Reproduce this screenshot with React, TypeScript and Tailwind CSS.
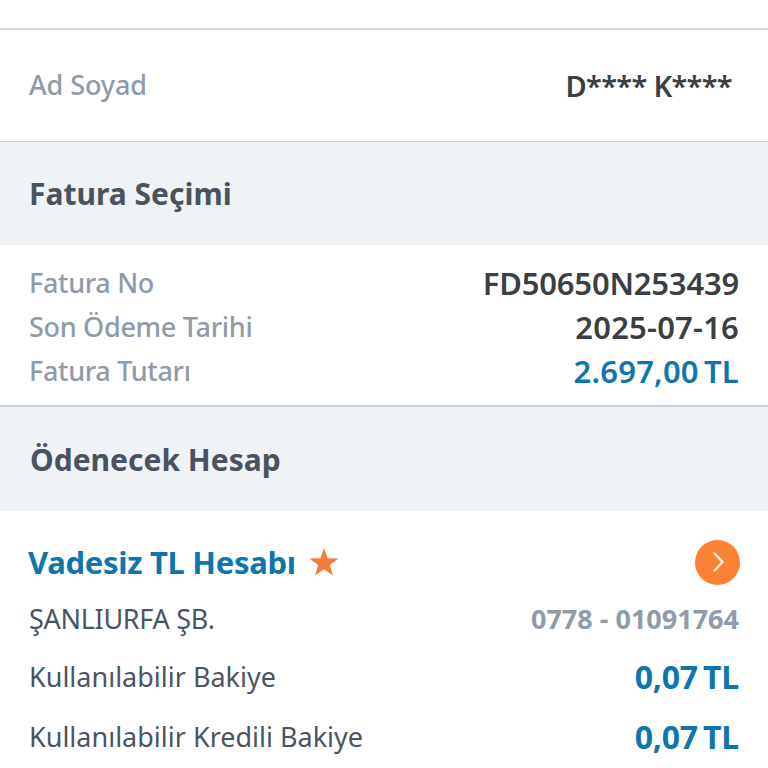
const font = "font-['Noto_Sans','Open_Sans',sans-serif]";

function InvoiceRow({ label, value, color }: { label: string; value: string; color: string }) {
  return (
    <div className="flex h-[44px] items-center justify-between">
      <span className="text-[27px] font-medium tracking-[-0.3px] text-[#8e9baa]">{label}</span>
      <span className={`text-[31px] font-semibold [word-spacing:-3px] ${color}`}>{value}</span>
    </div>
  );
}

function BalanceRow({ label, value }: { label: string; value: string }) {
  return (
    <div className="flex h-[60px] items-center justify-between">
      <span className="text-[27px] text-[#4a5560]">{label}</span>
      <span className="text-[32px] font-bold tracking-[-0.2px] [word-spacing:-3px] text-[#0f75ad]">{value}</span>
    </div>
  );
}

export default function App() {
  return (
    <div className={`h-[768px] w-[768px] overflow-hidden bg-white ${font}`}>
      <div className="h-[30px] border-b-2 border-[#d5d8db]" />

      <div className="flex h-[112px] items-center justify-between border-b border-[#cfd3d6] pl-[29px] pr-[36px]">
        <span className="text-[27px] font-medium tracking-[-0.1px] text-[#8e9baa]">Ad Soyad</span>
        <span className="text-[29px] font-semibold tracking-[-0.7px] text-[#3a3f44]">D**** K****</span>
      </div>

      <div className="flex h-[103px] items-center bg-[#eff3f5] pl-[29px]">
        <span className="text-[30px] font-bold text-[#49525e]">Fatura Seçimi</span>
      </div>

      <div className="h-[162px] border-b-2 border-[#cfd3d6] pl-[29px] pr-[29px] pt-[16px]">
        <InvoiceRow label="Fatura No" value="FD50650N253439" color="tracking-[-0.2px] text-[#3a3f44]" />
        <InvoiceRow label="Son Ödeme Tarihi" value="2025-07-16" color="tracking-[0.2px] text-[#3a3f44]" />
        <InvoiceRow label="Fatura Tutarı" value="2.697,00 TL" color="tracking-[0.2px] text-[#0f75ad]" />
      </div>

      <div className="flex h-[104px] items-center bg-[#eff3f5] pl-[30px]">
        <span className="text-[30px] font-bold text-[#49525e]">Ödenecek Hesap</span>
      </div>

      <div className="pl-[29px] pr-[29px] pt-[28px]">
        <div className="flex h-[46px] items-center justify-between">
          <div className="flex items-center gap-[12px]">
            <span className="-ml-px text-[31px] font-bold tracking-[-0.3px] text-[#0f75ad]">Vadesiz TL Hesabı</span>
            <svg width="32" height="32" viewBox="0 0 24 24" fill="#f47b3e">
              <path d="M12 1.5l2.7 7.6 8.1.2-6.4 5 2.3 7.7-6.7-4.5-6.7 4.5 2.3-7.7-6.4-5 8.1-.2z" />
            </svg>
          </div>
          <div className="-mr-px flex h-[45px] w-[45px] items-center justify-center rounded-full bg-[#fb8136]">
            <svg width="22" height="22" viewBox="0 0 24 24" fill="none" stroke="#ffeadb" strokeWidth="2.6" strokeLinecap="round" strokeLinejoin="round">
              <path d="M8 2.5l9 9.5-9 9.5" />
            </svg>
          </div>
        </div>
        <div className="mt-[12px] flex h-[44px] items-center justify-between">
          <span className="text-[27px] tracking-[-0.3px] text-[#4a5560]">ŞANLIURFA ŞB.</span>
          <span className="text-[27px] font-bold text-[#8e9baa]">0778 - 01091764</span>
        </div>
        <div className="mt-[6px]">
          <BalanceRow label="Kullanılabilir Bakiye" value="0,07 TL" />
          <BalanceRow label="Kullanılabilir Kredili Bakiye" value="0,07 TL" />
        </div>
      </div>
    </div>
  );
}
